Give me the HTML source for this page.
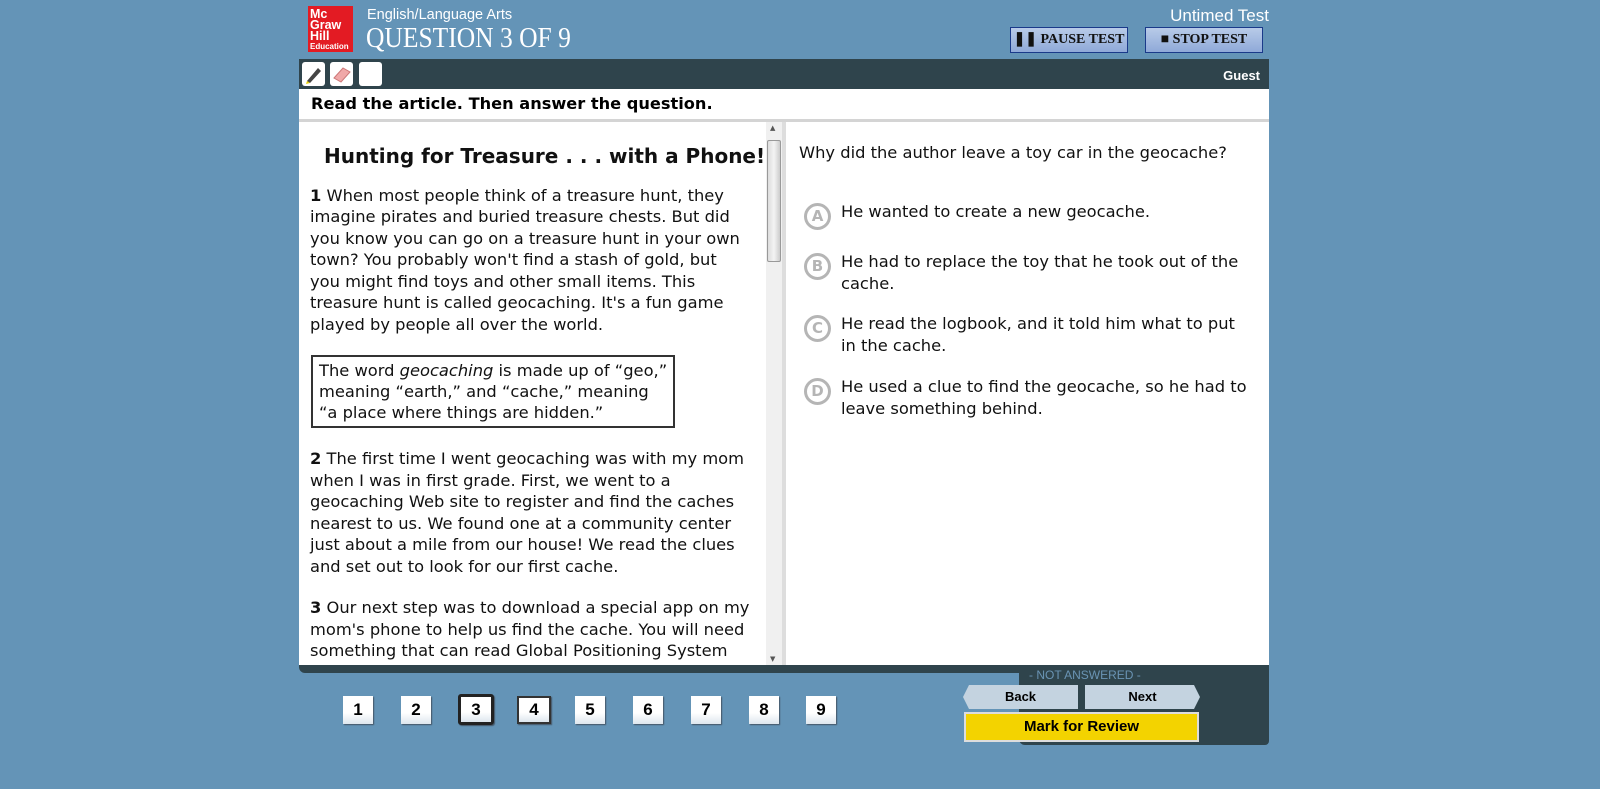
<!DOCTYPE html>
<html><head><meta charset="utf-8"><style>
*{margin:0;padding:0;box-sizing:border-box}
body{width:1600px;height:789px;background:#6494b7;font-family:"DejaVu Sans","Liberation Sans",sans-serif;position:relative;overflow:hidden}
.abs{position:absolute}
.logo{left:308px;top:6px;width:45px;height:46px;background:#e31b23;color:#fff;font:bold 12.5px/11px "Liberation Sans",sans-serif;padding:3px 2px}
.logo small{font-size:8px;display:block;line-height:10px}
.subj{left:367px;top:7px;color:#fff;font:14.5px "Liberation Sans",sans-serif}
.qn{left:366px;top:22px;color:#fff;font:29px "Liberation Serif",serif;transform:scaleX(0.88);transform-origin:left}
.untimed{right:331px;top:6px;color:#fff;font:17px "Liberation Sans",sans-serif}
.tbtn{top:27px;height:26px;border:1px solid #1a3a8a;background:linear-gradient(#b8cbe8,#8fa9d8);font:bold 14px "Liberation Serif",serif;color:#111;text-align:center;line-height:24px}
.bar{left:299px;top:59px;width:970px;height:30px;background:#2f444c}
.tool{top:62px;width:23px;height:24px;background:#fff;border-radius:3px}
.guest{right:340px;top:68px;color:#fff;font:bold 13px "Liberation Sans",sans-serif}
.instr{left:299px;top:89px;width:970px;background:#fff;font:bold 16.2px "DejaVu Sans",sans-serif;padding:5px 12px;border-bottom:3px solid #d4d4d4;height:33px}
.left{left:299px;top:122px;width:467px;height:543px;background:#fff;overflow:hidden;font-size:16.3px;line-height:21.5px;color:#111;padding:0 0 0 11px}
.sb{left:766px;top:122px;width:16px;height:543px;background:#f0f0f0}
.div{left:782px;top:122px;width:4px;height:543px;background:#ddd}
.right{left:786px;top:122px;width:483px;height:543px;background:#fff;font-size:16.3px;line-height:21.5px;color:#111}
.opt{position:absolute;left:18px}
.circ{position:absolute;left:0;top:0;width:27px;height:27px;border:3px solid #b5b5b5;border-radius:50%;color:#b5b5b5;font:bold 15px/21px "DejaVu Sans",sans-serif;text-align:center}
.otxt{position:absolute;left:37px;top:-2px;white-space:nowrap}
.nav{top:696px;width:30px;height:28px;background:linear-gradient(#fff 60%,#dde6ee);font:bold 17px "Liberation Sans",sans-serif;text-align:center;line-height:28px;box-shadow:1px 1px 1px #456}
</style></head><body>
<div class="abs logo">Mc<br>Graw<br>Hill<small>Education</small></div>
<div class="abs subj">English/Language Arts</div>
<div class="abs qn">QUESTION 3 OF 9</div>
<div class="abs untimed">Untimed Test</div>
<div class="abs tbtn" style="left:1010px;width:118px">❚❚ PAUSE TEST</div>
<div class="abs tbtn" style="left:1145px;width:118px">■ STOP TEST</div>
<div class="abs bar"></div>
<div class="abs tool" style="left:302px"><svg width="23" height="24"><path d="M5 19 L16 6 L19 9 L8 21 Z" fill="#444"/><path d="M5 19 L8 21 L4 22Z" fill="#e8d000"/></svg></div>
<div class="abs tool" style="left:330px"><svg width="23" height="24"><path d="M4 16 L13 6 L20 10 L11 20 Z" fill="#f0a8a8" stroke="#c77" /></svg></div>
<div class="abs tool" style="left:359px"></div>
<div class="abs guest">Guest</div>
<div class="abs instr">Read the article. Then answer the question.</div>
<div class="abs left">
<div style="font-weight:bold;font-size:20px;margin-top:24px;padding-left:14px;white-space:nowrap">Hunting for Treasure . . . with a Phone!</div>
<div style="margin-top:17px;white-space:nowrap"><b>1</b> When most people think of a treasure hunt, they<br>imagine pirates and buried treasure chests. But did<br>you know you can go on a treasure hunt in your own<br>town? You probably won't find a stash of gold, but<br>you might find toys and other small items. This<br>treasure hunt is called geocaching. It's a fun game<br>played by people all over the world.</div>
<div style="margin:20px 0 0 1px;width:364px;border:2px solid #333;padding:3px 6px;line-height:21px;white-space:nowrap">The word <i>geocaching</i> is made up of “geo,”<br>meaning “earth,” and “cache,” meaning<br>“a place where things are hidden.”</div>
<div style="margin-top:20px;white-space:nowrap"><b>2</b> The first time I went geocaching was with my mom<br>when I was in first grade. First, we went to a<br>geocaching Web site to register and find the caches<br>nearest to us. We found one at a community center<br>just about a mile from our house! We read the clues<br>and set out to look for our first cache.</div>
<div style="margin-top:20px;white-space:nowrap"><b>3</b> Our next step was to download a special app on my<br>mom's phone to help us find the cache. You will need<br>something that can read Global Positioning System<br>(GPS) coordinates. These are like a postal address</div>
</div>
<div class="abs sb"><div style="position:absolute;left:1px;top:18px;width:14px;height:122px;background:linear-gradient(90deg,#ddd,#f4f4f4,#ccc);border:1px solid #999;border-radius:2px"></div><div style="position:absolute;top:2px;left:4px;font-size:7px;color:#555">▲</div><div style="position:absolute;bottom:2px;left:4px;font-size:7px;color:#555">▼</div></div>
<div class="abs div"></div>
<div class="abs right">
<div style="position:absolute;left:13px;top:20px;white-space:nowrap">Why did the author leave a toy car in the geocache?</div>
<div class="opt" style="top:81px"><div class="circ">A</div><div class="otxt">He wanted to create a new geocache.</div></div>
<div class="opt" style="top:131px"><div class="circ">B</div><div class="otxt">He had to replace the toy that he took out of the<br>cache.</div></div>
<div class="opt" style="top:193px"><div class="circ">C</div><div class="otxt">He read the logbook, and it told him what to put<br>in the cache.</div></div>
<div class="opt" style="top:256px"><div class="circ">D</div><div class="otxt">He used a clue to find the geocache, so he had to<br>leave something behind.</div></div>
</div>
<div class="abs" style="left:299px;top:665px;width:970px;height:8px;background:#2f444c;border-radius:0 0 0 6px"></div>
<div class="abs" style="left:1019px;top:665px;width:250px;height:80px;background:#2f444c;border-radius:0 0 4px 6px"></div>
<div class="abs" style="left:1029px;top:668px;color:#6a94b4;font:12px 'Liberation Sans',sans-serif">- NOT ANSWERED -</div>
<div class="abs" style="left:963px;top:685px;width:115px;height:24px;background:#c4d3e0;clip-path:polygon(6px 0,100% 0,100% 100%,6px 100%,0 50%);font:bold 13px/24px 'Liberation Sans',sans-serif;text-align:center">Back</div>
<div class="abs" style="left:1085px;top:685px;width:115px;height:24px;background:#c4d3e0;clip-path:polygon(0 0,calc(100% - 6px) 0,100% 50%,calc(100% - 6px) 100%,0 100%);font:bold 13px/24px 'Liberation Sans',sans-serif;text-align:center">Next</div>
<div class="abs" style="left:964px;top:712px;width:235px;height:30px;background:#f3d300;border:2px solid #ddd;font:bold 15px/26px 'Liberation Sans',sans-serif;text-align:center">Mark for Review</div>
<div class="abs nav" style="left:343px">1</div>
<div class="abs nav" style="left:401px">2</div>
<div class="abs nav" style="left:458px;top:694px;width:36px;height:31px;border:3px solid #222;border-radius:3px;line-height:25px">3</div>
<div class="abs nav" style="left:517px;width:34px;border:2px solid #333;line-height:24px">4</div>
<div class="abs nav" style="left:575px">5</div>
<div class="abs nav" style="left:633px">6</div>
<div class="abs nav" style="left:691px">7</div>
<div class="abs nav" style="left:749px">8</div>
<div class="abs nav" style="left:806px">9</div>
</body></html>
